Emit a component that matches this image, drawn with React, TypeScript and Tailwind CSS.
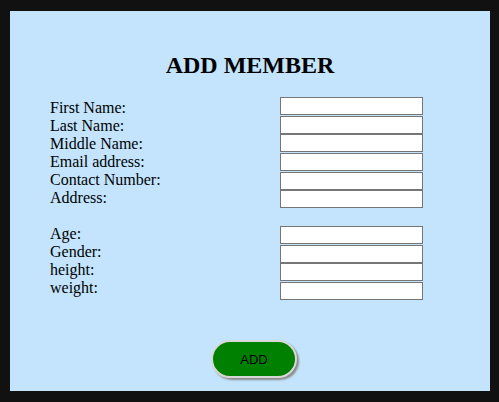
const groupA = ['First Name:', 'Last Name:', 'Middle Name:', 'Email address:', 'Contact Number:', 'Address:'];
const groupB = ['Age:', 'Gender:', 'height:', 'weight:'];

const Field = () => (
  <div className="flex h-[18.6px] items-center">
    <input
      type="text"
      className="h-[18px] w-[143px] border border-[#767676] bg-white px-0.5 text-[13px] outline-none"
    />
  </div>
);

export default function App() {
  return (
    <div className="min-h-[402px] w-[499px] bg-[#111111] pt-[11px] pl-[10px] pb-[11px]">
      <div
        className="flex h-[380px] w-[480px] flex-col bg-[#c3e4fc] text-black"
        style={{ fontFamily: '"Liberation Serif", "Times New Roman", serif' }}
      >
        <h1 className="mt-[40px] text-center text-[24px] font-bold leading-[28px]">ADD MEMBER</h1>
        <div className="mt-[18px] flex pl-[40px] text-[16px]">
          <div className="w-[230px] pt-[2px] leading-[18px]">
            {groupA.map((l) => (
              <div key={l}>{l}</div>
            ))}
            <div className="h-[18px]" />
            {groupB.map((l) => (
              <div key={l}>{l}</div>
            ))}
          </div>
          <div>
            {groupA.map((l) => (
              <Field key={l} />
            ))}
            <div className="h-[17.4px]" />
            {groupB.map((l) => (
              <Field key={l} />
            ))}
          </div>
        </div>
        <div className="mt-[40px] flex justify-center pl-[8px]">
          <button
            className="h-[38px] w-[86px] rounded-full border-2 border-[#d8d8d8] bg-[#008000] text-[13px] text-black shadow-[2px_2px_2px_#8a8a8a]"
            style={{ fontFamily: '"Liberation Sans", Arial, sans-serif' }}
          >
            ADD
          </button>
        </div>
      </div>
    </div>
  );
}
